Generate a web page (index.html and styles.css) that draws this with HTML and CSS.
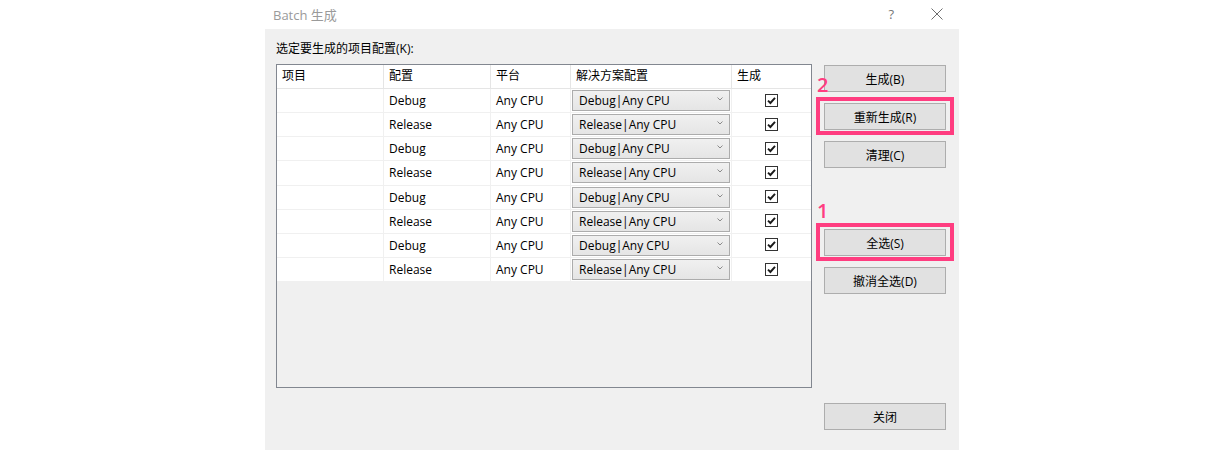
FILE: index.html
```html
<!DOCTYPE html>
<html lang="zh-CN">
<head>
    <meta charset="UTF-8">
    <title>Batch 生成</title>
    <link rel="stylesheet" href="styles.css">
</head>
<body>
    <div class="dialog">
        <div class="titlebar">
            <span class="title">Batch 生成</span>
            <span class="help">?</span>
            <svg class="close-x" width="12" height="12" viewBox="0 0 12 12">
                <path d="M0.5 0.5 L11.5 11.5 M11.5 0.5 L0.5 11.5" stroke="#6d6d6d" stroke-width="1"/>
            </svg>
        </div>

        <div class="content">
            <div class="left">
                <div class="label">选定要生成的项目配置(K):</div>
                <div class="listbox">
                    <div class="row head">
                        <div class="cell">项目</div>
                        <div class="cell">配置</div>
                        <div class="cell">平台</div>
                        <div class="cell">解决方案配置</div>
                        <div class="cell">生成</div>
                    </div>
                    <div id="rows"></div>
                </div>
            </div>

            <div class="buttons">
                <button class="btn">生成(B)</button>
                <div class="mark gap-s"><span class="num">2</span><button class="btn">重新生成(R)</button></div>
                <button class="btn gap-s">清理(C)</button>
                <div class="mark gap-l"><span class="num">1</span><button class="btn">全选(S)</button></div>
                <button class="btn gap-s">撤消全选(D)</button>
                <button class="btn gap-xl">关闭</button>
            </div>
        </div>
    </div>

    <script>
        // project configurations
        const configs = ['Debug', 'Release', 'Debug', 'Release', 'Debug', 'Release', 'Debug', 'Release'];

        const chevron = '<svg width="6" height="4" viewBox="0 0 6 4"><path d="M0.5 0.5 L3 3 L5.5 0.5" fill="none" stroke="#8a8a8a" stroke-width="1"/></svg>';
        const check = '<svg width="13" height="13" viewBox="0 0 13 13"><rect x="0.5" y="0.5" width="12" height="12" fill="#fff" stroke="#333"/><path d="M3 6.6 L5.4 9 L10 3.8" fill="none" stroke="#1a1a1a" stroke-width="1.9"/></svg>';

        document.getElementById('rows').innerHTML = configs.map(cfg => `
            <div class="row">
                <div class="cell"></div>
                <div class="cell">${cfg}</div>
                <div class="cell">Any CPU</div>
                <div class="cell combo-cell">
                    <div class="combo"><span>${cfg}|Any CPU</span>${chevron}</div>
                </div>
                <div class="cell check-cell">${check}</div>
            </div>
        `).join('');
    </script>
</body>
</html>
```

FILE: styles.css
```css
* {
    box-sizing: border-box;
    margin: 0;
    padding: 0;
}

body {
    background: #fff;
    font-family: "Open Sans", "Noto Sans CJK SC", sans-serif;
    font-size: 12px;
    color: #000;
}

.dialog {
    width: 694px;
    height: 450px;
    margin-left: 265px;
    display: flex;
    flex-direction: column;
}

/* Title bar */
.titlebar {
    height: 29px;
    display: flex;
    align-items: center;
    padding-left: 8px;
    background: #fff;
}

.title {
    font-size: 13px;
    color: #9a9a9a;
    flex: 1;
}

.help {
    font-size: 13px;
    color: #777;
    margin-right: 37px;
    margin-bottom: 2px;
}

.close-x {
    margin-right: 16px;
    margin-bottom: 2px;
}

/* Body */
.content {
    flex: 1;
    background: #f0f0f0;
    padding: 0 11px;
    display: flex;
    gap: 12px;
}

.left {
    width: 536px;
}

.label {
    margin-top: 12px;
    line-height: 16px;
    margin-bottom: 7px;
}

.listbox {
    height: 324px;
    border: 1px solid #828790;
    background: #f0f0f0;
}

.row {
    display: grid;
    grid-template-columns: 107px 107px 80px 161px 79px;
    height: 24.15px;
    background: #fff;
    border-bottom: 1px solid #f0f0f0;
}

.row.head {
    height: 24px;
    border-bottom: 1px solid #e5e5e5;
}

.cell {
    border-right: 1px solid #f0f0f0;
    padding-left: 5px;
    line-height: 23px;
    white-space: nowrap;
}

.head .cell {
    border-right-color: #e5e5e5;
    line-height: 22px;
}

.cell:last-child {
    border-right: none;
}

.combo-cell {
    padding: 1px 0 0 1px;
}

.combo {
    width: 158px;
    height: 21px;
    border: 1px solid #acacac;
    background: linear-gradient(#f0f0f0, #e5e5e5);
    display: flex;
    align-items: center;
    justify-content: space-between;
    padding: 0 6px 0 6px;
    line-height: 19px;
}

.combo svg {
    margin-bottom: 3px;
}

.check-cell {
    display: flex;
    align-items: center;
    justify-content: center;
    padding-left: 0;
    padding-bottom: 1px;
}

/* Buttons */
.buttons {
    width: 122px;
    padding-top: 36px;
    display: flex;
    flex-direction: column;
}

.btn {
    width: 122px;
    height: 27px;
    border: 1px solid #adadad;
    background: #e1e1e1;
    font-family: inherit;
    font-size: 12px;
    color: #000;
}

.gap-s { margin-top: 11px; }
.gap-l { margin-top: 61px; }
.gap-xl { margin-top: 109px; }

.mark {
    position: relative;
}

.mark::after {
    content: "";
    position: absolute;
    top: -6px;
    bottom: -5px;
    left: -8px;
    right: -8px;
    border: 4px solid #ff3d80;
}

.num {
    position: absolute;
    left: -7px;
    top: -29px;
    font-size: 20px;
    line-height: 22px;
    font-weight: 600;
    color: #ff3d80;
    font-family: "Open Sans", sans-serif;
}
```
